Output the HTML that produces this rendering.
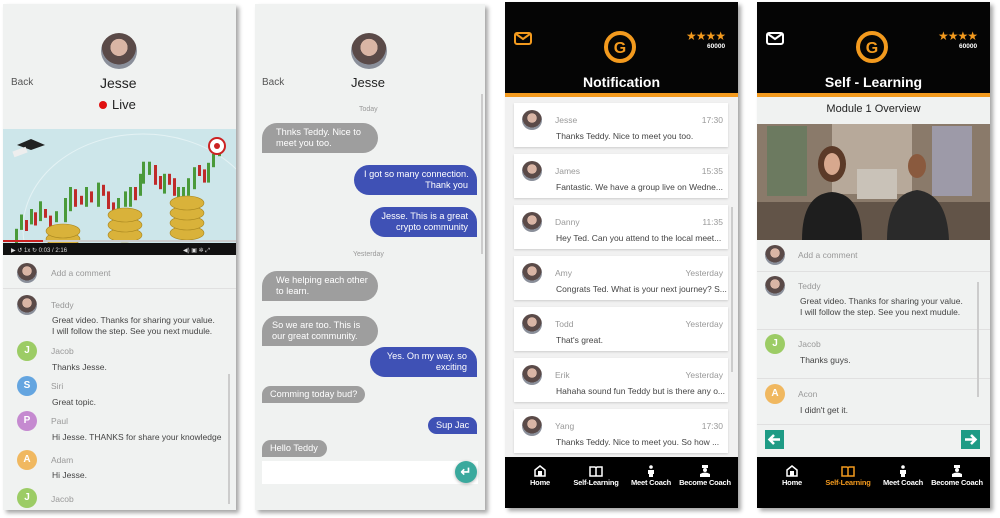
<!DOCTYPE html><html><head><style>
*{margin:0;padding:0;box-sizing:border-box}
body{width:1000px;height:518px;background:#fff;position:relative;overflow:hidden;font-family:"Liberation Sans",sans-serif}
.a{position:absolute}
.scr{position:absolute;background:#f0f2f1;box-shadow:3px 3px 4px rgba(0,0,0,.35);overflow:hidden}
.t{position:absolute;white-space:nowrap}
.av{position:absolute;border-radius:50%;color:#fff;font-size:10px;font-weight:bold;text-align:center;line-height:20px;width:20px;height:20px}
.ph{position:absolute;border-radius:50%;background:radial-gradient(circle at 50% 40%,#d9b5a5 0 30%,#5a4a48 31% 60%,#8a8f9a 61%)}
.g{color:#999;font-size:8.5px}
.m{color:#444;font-size:8.5px}
.hr{position:absolute;height:1px;background:#e0e0e0}
.bl{position:absolute;background:#9e9e9e;color:#fff;font-size:9.2px;line-height:11px;border-radius:15px 15px 15px 0;padding:4px 10px;white-space:nowrap}
.br{position:absolute;background:#3f51b5;color:#fff;font-size:9.2px;line-height:11px;border-radius:15px 15px 0 15px;padding:4px 10px;text-align:right;white-space:nowrap}
.card{position:absolute;left:9px;width:214px;height:44px;background:#fff;box-shadow:0 1px 2px rgba(0,0,0,.15)}
.nav{position:absolute;left:0;top:455px;width:233px;height:53px;background:#000}
.ni{position:absolute;top:8px;width:60px;text-align:center;color:#fff;font-size:7.5px;font-weight:bold;letter-spacing:-.2px}
.ni svg{display:block;margin:0 auto 1px}
</style></head><body>

<!-- SCREEN 1 -->
<div class="scr" style="left:3px;top:4px;width:233px;height:506px">
 <div class="ph" style="left:98px;top:29px;width:36px;height:36px"></div>
 <div class="t" style="left:8px;top:73px;font-size:10px;color:#555">Back</div>
 <div class="t" style="left:97px;top:71px;font-size:14px;color:#222">Jesse</div>
 <div class="a" style="left:96px;top:97px;width:8px;height:8px;border-radius:50%;background:#e01010"></div>
 <div class="t" style="left:109px;top:93px;font-size:13px;color:#222">Live</div>
 <svg class="a" style="left:0;top:125px" width="233" height="126" viewBox="0 0 233 126">
  <rect width="233" height="126" fill="#cde6ea"/>
  <ellipse cx="140" cy="100" rx="120" ry="95" fill="none" stroke="#e4f2f4" stroke-width="1"/>
  <g transform="translate(0,-8) scale(1,1.1)">
  <g fill="#4a9a3a"><rect x="12" y="98" width="3" height="14"/><rect x="17" y="85" width="3" height="14"/><rect x="27" y="80" width="3" height="14"/><rect x="36" y="73" width="3" height="18"/><rect x="52" y="82" width="3" height="10"/><rect x="61" y="70" width="3" height="22"/><rect x="66" y="60" width="3" height="22"/><rect x="82" y="60" width="3" height="18"/><rect x="94" y="56" width="3" height="22"/><rect x="114" y="70" width="3" height="20"/><rect x="121" y="64" width="3" height="14"/><rect x="126" y="60" width="3" height="18"/><rect x="136" y="48" width="3" height="20"/><rect x="139" y="37" width="3" height="20"/><rect x="145" y="37" width="3" height="12"/><rect x="160" y="48" width="3" height="18"/><rect x="174" y="60" width="3" height="20"/><rect x="179" y="60" width="3" height="16"/><rect x="184" y="52" width="3" height="16"/><rect x="190" y="42" width="3" height="20"/><rect x="204" y="38" width="3" height="18"/><rect x="209" y="30" width="3" height="12"/><rect x="215" y="18" width="3" height="14"/></g>
  <g fill="#c02a2a"><rect x="22" y="90" width="3" height="10"/><rect x="31" y="83" width="3" height="12"/><rect x="41" y="80" width="3" height="8"/><rect x="46" y="86" width="3" height="10"/><rect x="71" y="62" width="3" height="16"/><rect x="77" y="68" width="3" height="8"/><rect x="87" y="64" width="3" height="10"/><rect x="99" y="58" width="3" height="10"/><rect x="104" y="64" width="3" height="16"/><rect x="109" y="74" width="3" height="12"/><rect x="131" y="60" width="3" height="12"/><rect x="151" y="40" width="3" height="18"/><rect x="156" y="50" width="3" height="12"/><rect x="165" y="48" width="3" height="10"/><rect x="170" y="52" width="3" height="16"/><rect x="195" y="40" width="3" height="10"/><rect x="200" y="44" width="3" height="12"/></g>
  </g>
  <g fill="#d9b23a" stroke="#a8861f" stroke-width=".6"><ellipse cx="60" cy="110" rx="17" ry="7"/><ellipse cx="60" cy="102" rx="17" ry="7"/><ellipse cx="122" cy="106" rx="17" ry="7"/><ellipse cx="122" cy="96" rx="17" ry="7"/><ellipse cx="122" cy="86" rx="17" ry="7"/><ellipse cx="184" cy="104" rx="17" ry="7"/><ellipse cx="184" cy="94" rx="17" ry="7"/><ellipse cx="184" cy="84" rx="17" ry="7"/><ellipse cx="184" cy="74" rx="17" ry="7"/></g>
  <circle cx="214" cy="17" r="8" fill="#fff" stroke="#c22" stroke-width="2"/><circle cx="214" cy="17" r="3" fill="#c22"/>
  <path d="M14 16 L28 10 L42 16 L28 21Z" fill="#222"/><rect x="10" y="20" width="14" height="6" fill="#eee" transform="rotate(-20 17 23)"/>
  <rect x="0" y="114" width="233" height="12" fill="#111"/><rect x="0" y="111" width="233" height="2" fill="#ccc"/><rect x="0" y="111" width="40" height="2" fill="#c22"/>
  <text x="8" y="123" fill="#ddd" font-size="6">▶ ↺  1x  ↻  0:03 / 2:16</text><text x="180" y="123" fill="#ddd" font-size="6">◀) ▣ ✲ ⤢</text>
 </svg>
 <div class="ph" style="left:14px;top:259px;width:20px;height:20px"></div>
 <div class="t g" style="left:48px;top:264px">Add a comment</div>
 <div class="hr" style="left:0;top:284px;width:233px"></div>
 <div class="ph" style="left:14px;top:291px;width:20px;height:20px"></div>
 <div class="t g" style="left:48px;top:296px">Teddy</div>
 <div class="t m" style="left:49px;top:311px;line-height:11px">Great video. Thanks for sharing your value.<br>I will follow the step. See you next mudule.</div>
 <div class="av" style="left:14px;top:337px;background:#9ccc65">J</div><div class="t g" style="left:48px;top:342px">Jacob</div><div class="t m" style="left:49px;top:358px">Thanks Jesse.</div>
 <div class="av" style="left:14px;top:372px;background:#64a5e0">S</div><div class="t g" style="left:48px;top:377px">Siri</div><div class="t m" style="left:49px;top:393px">Great topic.</div>
 <div class="av" style="left:14px;top:407px;background:#c58ad0">P</div><div class="t g" style="left:48px;top:412px">Paul</div><div class="t m" style="left:49px;top:428px">Hi Jesse. THANKS for share your knowledge</div>
 <div class="av" style="left:14px;top:446px;background:#f0b860">A</div><div class="t g" style="left:48px;top:451px">Adam</div><div class="t m" style="left:49px;top:466px">Hi Jesse.</div>
 <div class="av" style="left:14px;top:484px;background:#9ccc65">J</div><div class="t g" style="left:48px;top:490px">Jacob</div>
 <div class="a" style="left:225px;top:370px;width:2px;height:130px;background:#ccc"></div>
</div>

<!-- SCREEN 2 -->
<div class="scr" style="left:255px;top:4px;width:230px;height:506px">
 <div class="ph" style="left:96px;top:29px;width:36px;height:36px"></div>
 <div class="t" style="left:7px;top:73px;font-size:10px;color:#555">Back</div>
 <div class="t" style="left:96px;top:71px;font-size:13px;color:#222">Jesse</div>
 <div class="a" style="left:226px;top:90px;width:2px;height:160px;background:#ccc"></div>
 <div class="t g" style="left:104px;top:102px;font-size:7px">Today</div>
 <div class="bl" style="left:7px;top:119px;width:116px;height:30px;padding-left:14px">Thnks Teddy. Nice to<br>meet you too.</div>
 <div class="br" style="left:99px;top:161px;width:123px;height:30px;padding-right:9px">I got so many connection.<br>Thank you</div>
 <div class="br" style="left:115px;top:203px;width:107px;height:30px;padding-right:9px">Jesse. This is a great<br>crypto community</div>
 <div class="t g" style="left:98px;top:247px;font-size:7px">Yesterday</div>
 <div class="bl" style="left:7px;top:267px;width:116px;height:30px;padding-left:14px">We helping each other<br>to learn.</div>
 <div class="bl" style="left:7px;top:312px;width:116px;height:30px">So we are too. This is<br>our great community.</div>
 <div class="br" style="left:115px;top:343px;width:107px;height:30px">Yes. On my way. so<br>exciting</div>
 <div class="bl" style="left:7px;top:382px;width:103px;height:17px;padding:3px 8px">Comming today bud?</div>
 <div class="br" style="left:173px;top:413px;width:49px;height:17px;padding:3px 8px">Sup Jac</div>
 <div class="bl" style="left:7px;top:436px;width:65px;height:17px;padding:3px 8px">Hello Teddy</div>
 <div class="a" style="left:7px;top:457px;width:216px;height:23px;background:#fff"></div>
 <div class="a" style="left:200px;top:457px;width:22px;height:22px;border-radius:50%;background:#3aa99d;box-shadow:0 1px 3px rgba(0,0,0,.3);color:#fff;font-size:13px;text-align:center;line-height:22px;font-weight:bold">↵</div>
</div>

<!-- SCREEN 3 -->
<div class="scr" style="left:505px;top:2px;width:233px;height:506px;background:#f1f1f1">
 <div class="a" style="left:0;top:0;width:233px;height:91px;background:#050505"></div>
 <div class="a" style="left:0;top:91px;width:233px;height:4px;background:#f39a1e"></div>
 <svg class="a" style="left:9px;top:30px" width="18" height="13"><rect x="1" y="1" width="16" height="11" rx="2" fill="none" stroke="#f39a1e" stroke-width="2"/><path d="M2 2 L9 7 L16 2" fill="none" stroke="#f39a1e" stroke-width="2"/></svg>
 <svg class="a" style="left:98px;top:28px" width="34" height="34"><circle cx="17" cy="17" r="14" fill="none" stroke="#f39a1e" stroke-width="4"/><text x="17" y="23" text-anchor="middle" fill="#f39a1e" font-size="16" font-weight="bold" font-family="Liberation Sans">G</text></svg>
 <div class="t" style="left:181px;top:27px;color:#f39a1e;font-size:12px;letter-spacing:-1px">★★★★</div>
 <div class="t" style="left:202px;top:41px;color:#fff;font-size:6.5px;font-weight:bold">60000</div>
 <div class="t" style="left:0;width:233px;text-align:center;top:72px;color:#fff;font-size:14px;font-weight:bold">Notification</div>
 <div class="a" style="left:226px;top:205px;width:2px;height:165px;background:#ccc"></div>
 <div class="card" style="top:101px"><div class="ph" style="left:8px;top:7px;width:20px;height:20px"></div><div class="t g" style="left:41px;top:12px">Jesse</div><div class="t g" style="right:5px;top:12px">17:30</div><div class="t m" style="left:42px;top:28px">Thanks Teddy. Nice to meet you too.</div></div>
 <div class="card" style="top:152px"><div class="ph" style="left:8px;top:7px;width:20px;height:20px"></div><div class="t g" style="left:41px;top:12px">James</div><div class="t g" style="right:5px;top:12px">15:35</div><div class="t m" style="left:42px;top:28px">Fantastic. We have a group live on Wedne...</div></div>
 <div class="card" style="top:203px"><div class="ph" style="left:8px;top:7px;width:20px;height:20px"></div><div class="t g" style="left:41px;top:12px">Danny</div><div class="t g" style="right:5px;top:12px">11:35</div><div class="t m" style="left:42px;top:28px">Hey Ted. Can you attend to the local meet...</div></div>
 <div class="card" style="top:254px"><div class="ph" style="left:8px;top:7px;width:20px;height:20px"></div><div class="t g" style="left:41px;top:12px">Amy</div><div class="t g" style="right:5px;top:12px">Yesterday</div><div class="t m" style="left:42px;top:28px">Congrats Ted. What is your next journey? S...</div></div>
 <div class="card" style="top:305px"><div class="ph" style="left:8px;top:7px;width:20px;height:20px"></div><div class="t g" style="left:41px;top:12px">Todd</div><div class="t g" style="right:5px;top:12px">Yesterday</div><div class="t m" style="left:42px;top:28px">That's great.</div></div>
 <div class="card" style="top:356px"><div class="ph" style="left:8px;top:7px;width:20px;height:20px"></div><div class="t g" style="left:41px;top:12px">Erik</div><div class="t g" style="right:5px;top:12px">Yesterday</div><div class="t m" style="left:42px;top:28px">Hahaha sound fun Teddy but is there any o...</div></div>
 <div class="card" style="top:407px"><div class="ph" style="left:8px;top:7px;width:20px;height:20px"></div><div class="t g" style="left:41px;top:12px">Yang</div><div class="t g" style="right:5px;top:12px">17:30</div><div class="t m" style="left:42px;top:28px">Thanks Teddy. Nice to meet you.  So how ...</div></div>
 <div class="nav">
  <div class="ni" style="left:5px"><svg width="12" height="12"><path d="M1 5 L6 1 L11 5 V11 H1Z" fill="none" stroke="#fff" stroke-width="1.5"/><rect x="4" y="6" width="4" height="5" fill="#fff"/></svg>Home</div>
  <div class="ni" style="left:61px"><svg width="14" height="12"><path d="M1 2 H6 L7 3 L8 2 H13 V11 H1Z M7 3 V11" fill="none" stroke="#fff" stroke-width="1.5"/></svg>Self-Learning</div>
  <div class="ni" style="left:116px"><svg width="10" height="12"><circle cx="5" cy="2" r="1.8" fill="#fff"/><path d="M2 5 H8 V9 H7 V12 H3 V9 H2Z" fill="#fff"/></svg>Meet Coach</div>
  <div class="ni" style="left:170px"><svg width="12" height="12"><rect x="3" y="0" width="6" height="3" fill="#fff"/><circle cx="6" cy="5" r="2" fill="#fff"/><path d="M1 12 V9 Q6 6 11 9 V12Z" fill="#fff"/></svg>Become Coach</div>
 </div>
</div>

<!-- SCREEN 4 -->
<div class="scr" style="left:757px;top:2px;width:233px;height:506px">
 <div class="a" style="left:0;top:0;width:233px;height:91px;background:#050505"></div>
 <div class="a" style="left:0;top:91px;width:233px;height:4px;background:#f39a1e"></div>
 <svg class="a" style="left:9px;top:30px" width="18" height="13"><rect x="1" y="1" width="16" height="11" rx="2" fill="none" stroke="#fff" stroke-width="2"/><path d="M2 2 L9 7 L16 2" fill="none" stroke="#fff" stroke-width="2"/></svg>
 <svg class="a" style="left:98px;top:28px" width="34" height="34"><circle cx="17" cy="17" r="14" fill="none" stroke="#f39a1e" stroke-width="4"/><text x="17" y="23" text-anchor="middle" fill="#f39a1e" font-size="16" font-weight="bold" font-family="Liberation Sans">G</text></svg>
 <div class="t" style="left:181px;top:27px;color:#f39a1e;font-size:12px;letter-spacing:-1px">★★★★</div>
 <div class="t" style="left:202px;top:41px;color:#fff;font-size:6.5px;font-weight:bold">60000</div>
 <div class="t" style="left:0;width:233px;text-align:center;top:72px;color:#fff;font-size:14px;font-weight:bold">Self - Learning</div>
 <div class="t" style="left:0;width:233px;text-align:center;top:101px;color:#222;font-size:11px">Module 1 Overview</div>
 <svg class="a" style="left:0;top:122px" width="233" height="116">
  <rect width="233" height="116" fill="#8a7a6a"/>
  <rect x="10" y="2" width="40" height="70" fill="#6c7a60"/><rect x="75" y="0" width="80" height="70" fill="#b7a99a"/><rect x="175" y="2" width="40" height="70" fill="#9d9aa8"/>
  <rect x="0" y="78" width="233" height="38" fill="#625448"/><rect x="100" y="45" width="40" height="30" fill="#c9c2b8"/>
  <ellipse cx="75" cy="40" rx="14" ry="18" fill="#5b3a28"/><ellipse cx="75" cy="40" rx="8" ry="11" fill="#d7a88e"/>
  <path d="M45 116 Q45 70 75 68 Q105 70 105 116Z" fill="#1e1e1e"/>
  <ellipse cx="160" cy="42" rx="9" ry="12" fill="#8a5a3e"/><path d="M130 116 Q130 70 160 66 Q190 70 192 116Z" fill="#2a2a2a"/>
 </svg>
 <div class="ph" style="left:8px;top:243px;width:20px;height:20px"></div>
 <div class="t g" style="left:41px;top:248px">Add a comment</div>
 <div class="hr" style="left:0;top:269px;width:233px"></div>
 <div class="ph" style="left:8px;top:274px;width:20px;height:20px"></div>
 <div class="t g" style="left:41px;top:279px">Teddy</div>
 <div class="t m" style="left:43px;top:294px;line-height:11px">Great video. Thanks for sharing your value.<br>I will follow the step. See you next mudule.</div>
 <div class="hr" style="left:0;top:327px;width:233px"></div>
 <div class="av" style="left:8px;top:332px;background:#9ccc65">J</div><div class="t g" style="left:41px;top:337px">Jacob</div><div class="t m" style="left:43px;top:353px">Thanks guys.</div>
 <div class="hr" style="left:0;top:376px;width:233px"></div>
 <div class="av" style="left:8px;top:382px;background:#f0b860">A</div><div class="t g" style="left:41px;top:387px">Acon</div><div class="t m" style="left:43px;top:403px">I didn't get it.</div>
 <div class="hr" style="left:0;top:422px;width:233px"></div>
 <div class="a" style="left:220px;top:280px;width:2px;height:115px;background:#ccc"></div>
 <svg class="a" style="left:8px;top:428px" width="19" height="19"><rect width="19" height="19" fill="#1e9b85"/><path d="M15 9.5 H5 M9 5 L4.5 9.5 L9 14" fill="none" stroke="#fff" stroke-width="2.5"/></svg>
 <svg class="a" style="left:204px;top:428px" width="19" height="19"><rect width="19" height="19" fill="#1e9b85"/><path d="M4 9.5 H14 M10 5 L14.5 9.5 L10 14" fill="none" stroke="#fff" stroke-width="2.5"/></svg>
 <div class="nav">
  <div class="ni" style="left:5px"><svg width="12" height="12"><path d="M1 5 L6 1 L11 5 V11 H1Z" fill="none" stroke="#fff" stroke-width="1.5"/><rect x="4" y="6" width="4" height="5" fill="#fff"/></svg>Home</div>
  <div class="ni" style="left:61px;color:#f39a1e"><svg width="14" height="12"><path d="M1 2 H6 L7 3 L8 2 H13 V11 H1Z M7 3 V11" fill="none" stroke="#f39a1e" stroke-width="1.5"/></svg>Self-Learning</div>
  <div class="ni" style="left:116px"><svg width="10" height="12"><circle cx="5" cy="2" r="1.8" fill="#fff"/><path d="M2 5 H8 V9 H7 V12 H3 V9 H2Z" fill="#fff"/></svg>Meet Coach</div>
  <div class="ni" style="left:170px"><svg width="12" height="12"><rect x="3" y="0" width="6" height="3" fill="#fff"/><circle cx="6" cy="5" r="2" fill="#fff"/><path d="M1 12 V9 Q6 6 11 9 V12Z" fill="#fff"/></svg>Become Coach</div>
 </div>
</div>
</body></html>
